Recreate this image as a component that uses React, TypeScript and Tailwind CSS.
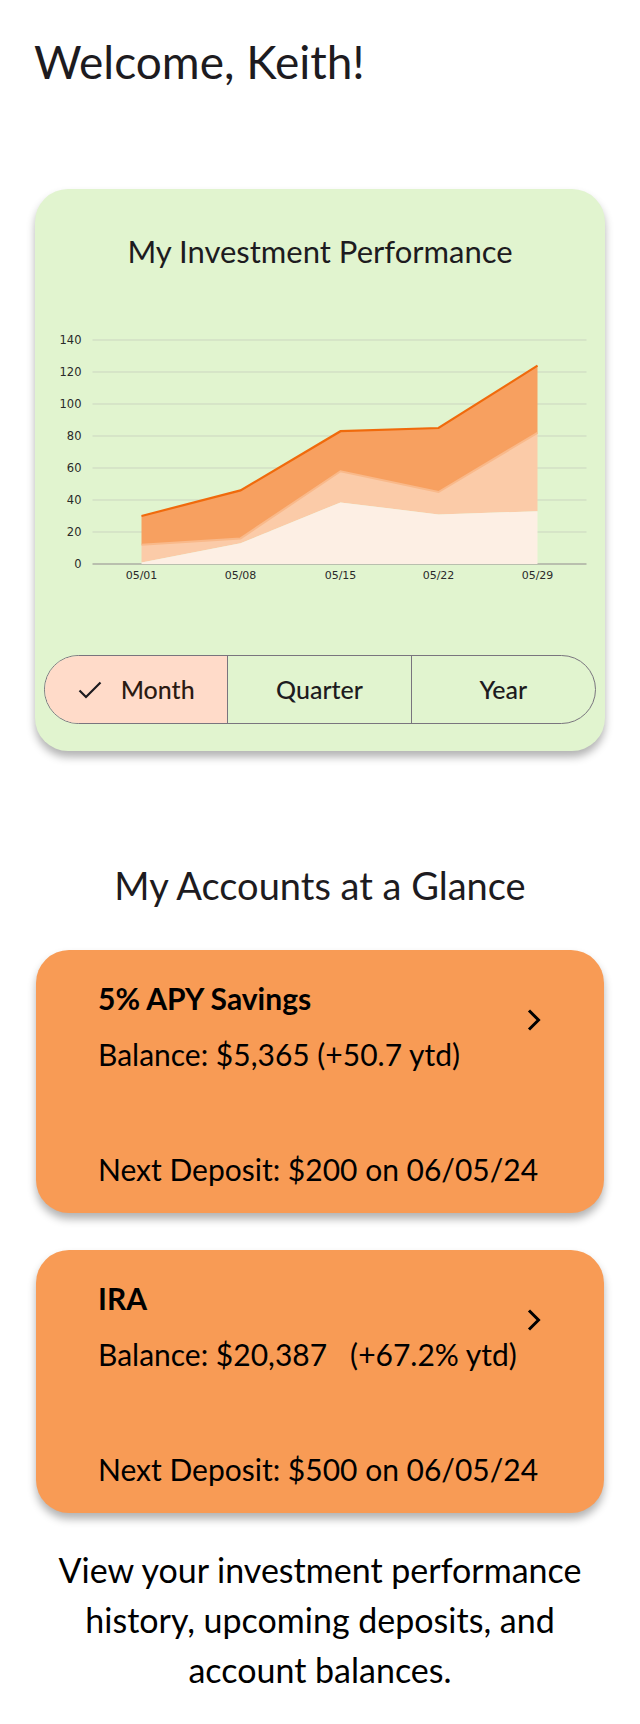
import React from "react";

const X = [106, 205, 305, 403, 502];
const LABELS = ["05/01", "05/08", "05/15", "05/22", "05/29"];
const TOP = [30, 46, 83, 85, 124];
const MID = [12, 16, 58, 45, 82];
const LOW = [1, 13, 38.5, 31, 33];

const y = (v: number) => 244 - 1.6 * v;

function band(upper: number[], lower: number[]) {
  const up = upper.map((v, i) => `${X[i]},${y(v)}`).join(" ");
  const down = lower
    .map((v, i) => `${X[i]},${y(v)}`)
    .reverse()
    .join(" ");
  return `${up} ${down}`;
}

function Chart() {
  const zero = [0, 0, 0, 0, 0];
  return (
    <svg viewBox="0 0 569 276" className="block w-full h-[276px]">
      {[0, 20, 40, 60, 80, 100, 120, 140].map((v) => (
        <g key={v}>
          <line
            x1={57}
            x2={551}
            y1={y(v)}
            y2={y(v)}
            stroke={v === 0 ? "#b9bfae" : "#cbd5c0"}
            strokeWidth={v === 0 ? 2 : 1}
          />
          <text
            x={46}
            y={y(v) + 4}
            textAnchor="end"
            fontSize="11.5"
            fill="#2a2a2a"
            fontFamily="'DejaVu Sans', sans-serif"
          >
            {v}
          </text>
        </g>
      ))}
      <polygon points={band(TOP, MID)} fill="#f7a060" />
      <polygon points={band(MID, LOW)} fill="#fbcba8" />
      <polygon points={band(LOW, zero)} fill="#fdefe4" />
      <polyline
        points={MID.map((v, i) => `${X[i]},${y(v)}`).join(" ")}
        fill="none"
        stroke="#f9b98a"
        strokeWidth="2"
      />
      <polyline
        points={TOP.map((v, i) => `${X[i]},${y(v)}`).join(" ")}
        fill="none"
        stroke="#f06a0c"
        strokeWidth="2.2"
      />
      {LABELS.map((l, i) => (
        <text
          key={l}
          x={X[i]}
          y={259}
          textAnchor="middle"
          fontSize="11"
          fill="#2a2a2a"
          fontFamily="'DejaVu Sans', sans-serif"
        >
          {l}
        </text>
      ))}
    </svg>
  );
}

function Segmented() {
  return (
    <div className="mx-[9px] grid grid-cols-3 h-[69px] rounded-full border-[1.5px] border-[#79747e] overflow-hidden text-[25px] font-medium text-[#1d1b20]">
      <div className="flex items-center justify-center gap-[19px] bg-[#ffdbc9] border-r-[1.5px] border-[#79747e] text-[#2b1a12]">
        <svg width="24" height="24" viewBox="0 0 24 24" fill="none">
          <path d="M1.5 12.5l6.5 6.5L22.5 4.5" stroke="#1d1b20" strokeWidth="2.2" />
        </svg>
        <span>Month</span>
      </div>
      <div className="flex items-center justify-center border-r-[1.5px] border-[#79747e]">Quarter</div>
      <div className="flex items-center justify-center">Year</div>
    </div>
  );
}

function Chevron() {
  return (
    <svg width="16" height="24" viewBox="0 0 16 24" fill="none">
      <path d="M3 2.5l9.5 9.5L3 21.5" stroke="#000" strokeWidth="3" />
    </svg>
  );
}

function AccountCard({
  name,
  balance,
  deposit,
}: {
  name: string;
  balance: string;
  deposit: string;
}) {
  return (
    <div className="rounded-[33px] bg-[#f89b55] shadow-[0_6px_8px_rgba(0,0,0,0.3)] h-[263px] pl-[62px] pr-[62px] pt-[28px] text-black">
      <div className="flex items-start justify-between">
        <div className="text-[30px] font-bold leading-[40px]">{name}</div>
        <div className="mt-[30px]">
          <Chevron />
        </div>
      </div>
      <div className="text-[30px] leading-[40px] mt-[2px] whitespace-pre">{balance}</div>
      <div className="text-[30px] leading-[40px] mt-[75px]">{deposit}</div>
    </div>
  );
}

export default function App() {
  return (
    <div className="w-[640px] min-h-[1724px] bg-white font-['Lato',sans-serif] text-[#1d1b20]">
      <h1 className="pl-[34px] pt-[34px] text-[46px] leading-[56px]">Welcome, Keith!</h1>

      <div className="mx-[35px] mt-[99px] rounded-[33px] bg-[#e1f4cf] shadow-[0_6px_8px_rgba(0,0,0,0.3)] pt-[42px] pb-[27px]">
        <h2 className="text-center text-[31px] leading-[40px]">My Investment Performance</h2>
        <div className="mt-[49px]">
          <Chart />
        </div>
        <div className="mt-[59px]">
          <Segmented />
        </div>
      </div>

      <h2 className="mt-[112px] text-center text-[38px] leading-[44px]">My Accounts at a Glance</h2>

      <div className="mt-[43px] mx-[36px] flex flex-col gap-[37px]">
        <AccountCard
          name="5% APY Savings"
          balance="Balance: $5,365 (+50.7 ytd)"
          deposit="Next Deposit: $200 on 06/05/24"
        />
        <AccountCard
          name="IRA"
          balance="Balance: $20,387   (+67.2% ytd)"
          deposit="Next Deposit: $500 on 06/05/24"
        />
      </div>

      <p className="mt-[32px] px-[50px] text-center text-[34px] leading-[50px] text-black">
        View your investment performance history, upcoming deposits, and account balances.
      </p>
    </div>
  );
}
